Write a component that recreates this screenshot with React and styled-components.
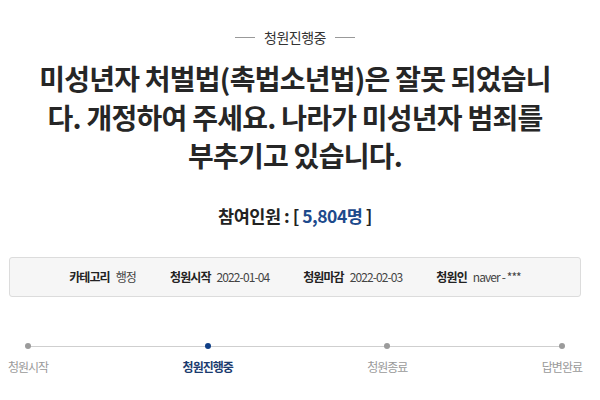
import styled, { createGlobalStyle } from "styled-components";

const GlobalStyle = createGlobalStyle`
  body {
    margin: 0;
    background: #fff;
    font-family: "Noto Sans CJK KR", "Noto Sans", "Liberation Sans", sans-serif;
  }
`;

const Page = styled.div`
  width: 590px;
  display: flex;
  flex-direction: column;
  align-items: center;
`;

const Status = styled.div`
  margin-top: 27px;
  display: flex;
  align-items: center;
  gap: 9px;
  font-size: 14px;
  line-height: 20px;
  color: #333;
  letter-spacing: -0.5px;

  &::before,
  &::after {
    content: "";
    width: 20px;
    height: 1px;
    background: #999;
  }
`;

const Title = styled.h1`
  margin: 12px 0 0;
  font-size: 28px;
  line-height: 38.5px;
  font-weight: 700;
  color: #262626;
  letter-spacing: -0.75px;
  text-align: center;
`;

const Count = styled.div`
  margin-top: 29px;
  font-size: 17.5px;
  line-height: 24px;
  font-weight: 700;
  color: #222;
  letter-spacing: -0.5px;

  em {
    font-style: normal;
    color: #1d4a8c;
  }
`;

const InfoBox = styled.div`
  box-sizing: border-box;
  margin-top: 29px;
  width: 572px;
  height: 40px;
  background: #f6f6f6;
  border: 1px solid #dcdcdc;
  border-radius: 3px;
  display: flex;
  align-items: center;
  justify-content: center;
  gap: 34px;
`;

const InfoItem = styled.div`
  display: flex;
  align-items: center;
  gap: 6px;
  font-size: 12px;
  letter-spacing: -0.9px;
  color: #444;

  b {
    color: #222;
    font-weight: 700;
  }
`;

const Track = styled.div`
  position: relative;
  box-sizing: border-box;
  margin-top: 46px;
  width: 590px;
  padding: 0 8px;
  display: flex;
  justify-content: space-between;

  &::before {
    content: "";
    position: absolute;
    left: 28px;
    right: 28px;
    top: 3px;
    height: 1px;
    background: #cfcfcf;
  }
`;

const Step = styled.div`
  position: relative;
  display: flex;
  flex-direction: column;
  align-items: center;
  gap: 10px;
  font-size: 12px;
  line-height: 16px;
  letter-spacing: -1px;
  color: ${(p) => (p.$active ? "#1b3b6e" : "#9a9a9a")};
  font-weight: ${(p) => (p.$active ? 700 : 400)};
`;

const Dot = styled.span`
  width: 6px;
  height: 6px;
  border-radius: 50%;
  background: ${(p) => (p.$active ? "#103f86" : "#9b9b9b")};
`;

const info = [
  ["카테고리", "행정"],
  ["청원시작", "2022-01-04"],
  ["청원마감", "2022-02-03"],
  ["청원인", "naver - ***"],
];

const steps = ["청원시작", "청원진행중", "청원종료", "답변완료"];

export default function App() {
  return (
    <>
      <GlobalStyle />
      <Page>
        <Status>청원진행중</Status>
        <Title>
          미성년자 처벌법(촉법소년법)은 잘못 되었습니
          <br />
          다. 개정하여 주세요. 나라가 미성년자 범죄를
          <br />
          부추기고 있습니다.
        </Title>
        <Count>
          참여인원 : [ <em>5,804명</em> ]
        </Count>
        <InfoBox>
          {info.map(([k, v]) => (
            <InfoItem key={k}>
              <b>{k}</b>
              <span>{v}</span>
            </InfoItem>
          ))}
        </InfoBox>
        <Track>
          {steps.map((s, i) => (
            <Step key={s} $active={i === 1}>
              <Dot $active={i === 1} />
              {s}
            </Step>
          ))}
        </Track>
      </Page>
    </>
  );
}
